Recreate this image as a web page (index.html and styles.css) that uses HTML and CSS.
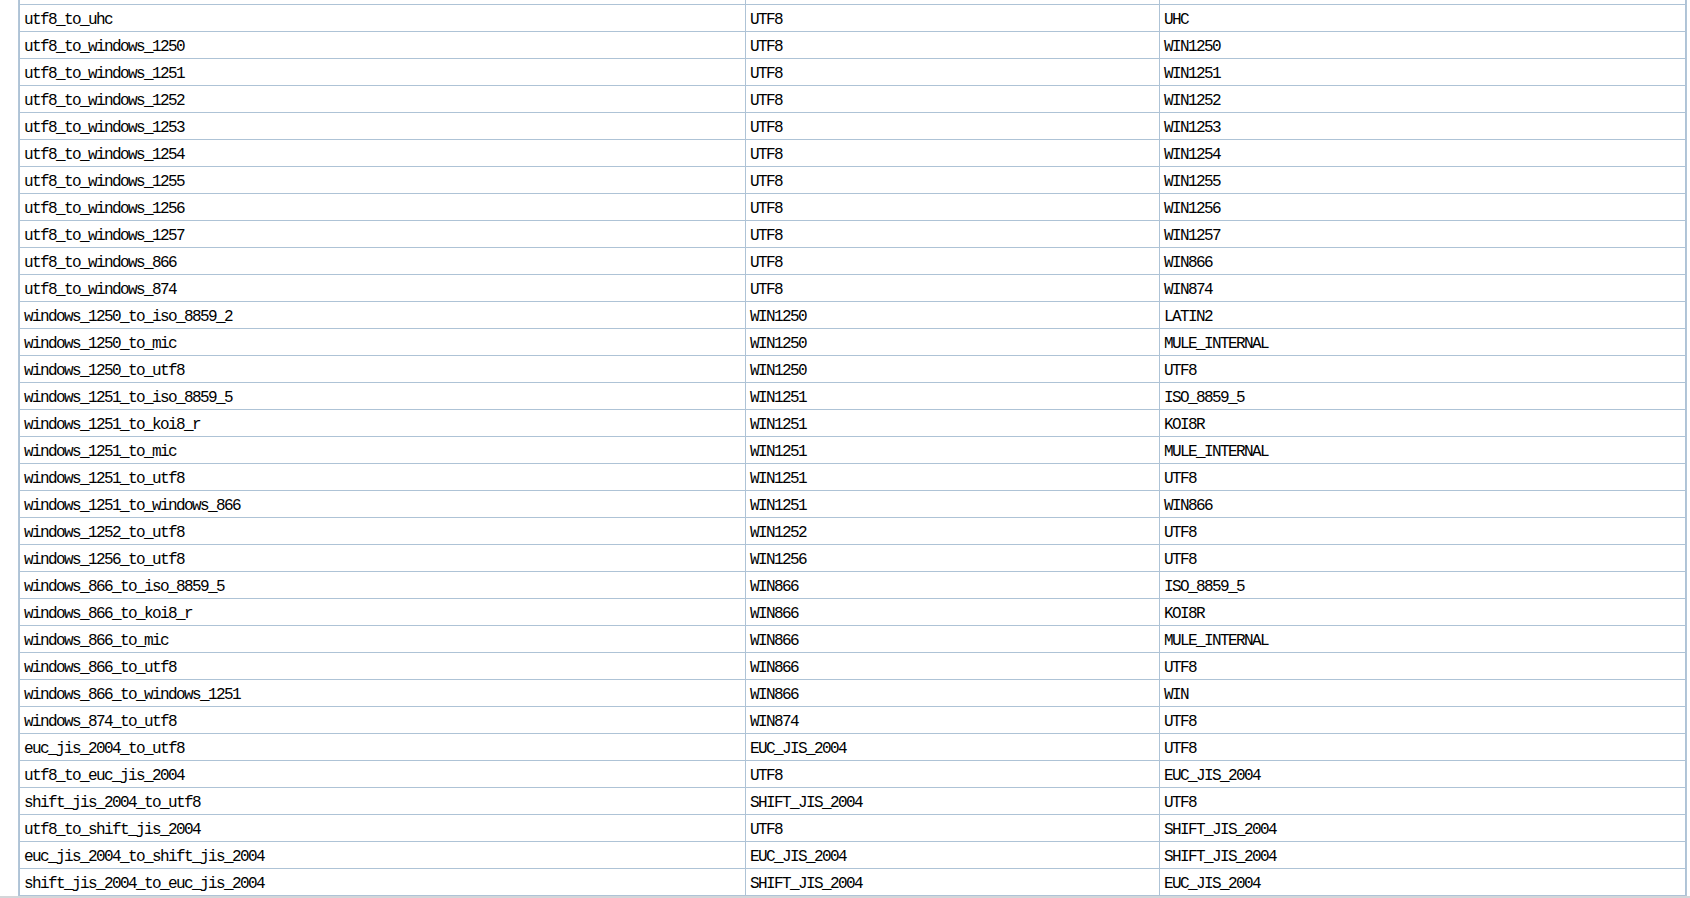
FILE: index.html
```html
<!DOCTYPE html>
<html>
<head>
<meta charset="utf-8">
<title>Conversions</title>
<link rel="stylesheet" href="styles.css">
</head>
<body>
<div class="viewport">
  <table class="grid">
    <colgroup>
      <col class="c-name">
      <col class="c-src">
      <col class="c-dst">
    </colgroup>
    <tbody>
      <tr class="partial"><td></td><td></td><td></td></tr>
      <tr><td>utf8_to_uhc</td><td>UTF8</td><td>UHC</td></tr>
      <tr><td>utf8_to_windows_1250</td><td>UTF8</td><td>WIN1250</td></tr>
      <tr><td>utf8_to_windows_1251</td><td>UTF8</td><td>WIN1251</td></tr>
      <tr><td>utf8_to_windows_1252</td><td>UTF8</td><td>WIN1252</td></tr>
      <tr><td>utf8_to_windows_1253</td><td>UTF8</td><td>WIN1253</td></tr>
      <tr><td>utf8_to_windows_1254</td><td>UTF8</td><td>WIN1254</td></tr>
      <tr><td>utf8_to_windows_1255</td><td>UTF8</td><td>WIN1255</td></tr>
      <tr><td>utf8_to_windows_1256</td><td>UTF8</td><td>WIN1256</td></tr>
      <tr><td>utf8_to_windows_1257</td><td>UTF8</td><td>WIN1257</td></tr>
      <tr><td>utf8_to_windows_866</td><td>UTF8</td><td>WIN866</td></tr>
      <tr><td>utf8_to_windows_874</td><td>UTF8</td><td>WIN874</td></tr>
      <tr><td>windows_1250_to_iso_8859_2</td><td>WIN1250</td><td>LATIN2</td></tr>
      <tr><td>windows_1250_to_mic</td><td>WIN1250</td><td>MULE_INTERNAL</td></tr>
      <tr><td>windows_1250_to_utf8</td><td>WIN1250</td><td>UTF8</td></tr>
      <tr><td>windows_1251_to_iso_8859_5</td><td>WIN1251</td><td>ISO_8859_5</td></tr>
      <tr><td>windows_1251_to_koi8_r</td><td>WIN1251</td><td>KOI8R</td></tr>
      <tr><td>windows_1251_to_mic</td><td>WIN1251</td><td>MULE_INTERNAL</td></tr>
      <tr><td>windows_1251_to_utf8</td><td>WIN1251</td><td>UTF8</td></tr>
      <tr><td>windows_1251_to_windows_866</td><td>WIN1251</td><td>WIN866</td></tr>
      <tr><td>windows_1252_to_utf8</td><td>WIN1252</td><td>UTF8</td></tr>
      <tr><td>windows_1256_to_utf8</td><td>WIN1256</td><td>UTF8</td></tr>
      <tr><td>windows_866_to_iso_8859_5</td><td>WIN866</td><td>ISO_8859_5</td></tr>
      <tr><td>windows_866_to_koi8_r</td><td>WIN866</td><td>KOI8R</td></tr>
      <tr><td>windows_866_to_mic</td><td>WIN866</td><td>MULE_INTERNAL</td></tr>
      <tr><td>windows_866_to_utf8</td><td>WIN866</td><td>UTF8</td></tr>
      <tr><td>windows_866_to_windows_1251</td><td>WIN866</td><td>WIN</td></tr>
      <tr><td>windows_874_to_utf8</td><td>WIN874</td><td>UTF8</td></tr>
      <tr><td>euc_jis_2004_to_utf8</td><td>EUC_JIS_2004</td><td>UTF8</td></tr>
      <tr><td>utf8_to_euc_jis_2004</td><td>UTF8</td><td>EUC_JIS_2004</td></tr>
      <tr><td>shift_jis_2004_to_utf8</td><td>SHIFT_JIS_2004</td><td>UTF8</td></tr>
      <tr><td>utf8_to_shift_jis_2004</td><td>UTF8</td><td>SHIFT_JIS_2004</td></tr>
      <tr><td>euc_jis_2004_to_shift_jis_2004</td><td>EUC_JIS_2004</td><td>SHIFT_JIS_2004</td></tr>
      <tr><td>shift_jis_2004_to_euc_jis_2004</td><td>SHIFT_JIS_2004</td><td>EUC_JIS_2004</td></tr>
    </tbody>
  </table>
</div>
</body>
</html>
```

FILE: styles.css
```css
html, body {
  margin: 0;
  padding: 0;
  background: #ffffff;
}

.viewport {
  height: 896px;
  overflow: hidden;
  padding-left: 18px;
  border-bottom: 2px solid #d4d6d9;
  background: #ffffff;
}

.grid {
  margin-top: -22px;
  border-collapse: separate;
  border-spacing: 0;
  table-layout: fixed;
  width: 1669px;
  border-left: 1px solid #b3c6d8;
  border-right: 1px solid #b3c6d8;
  font-family: "Liberation Mono", "DejaVu Sans Mono", monospace;
  font-size: 16px;
  letter-spacing: -1.6px;
  color: #000000;
}

.c-name { width: 726px; }
.c-src { width: 414px; }
.c-dst { width: 527px; }

.grid td {
  box-sizing: border-box;
  height: 27px;
  padding: 4px 4px 0 4px;
  line-height: 22px;
  white-space: nowrap;
  overflow: hidden;
  border-left: 1px solid #aec3d6;
  border-bottom: 1px solid #aec3d6;
  vertical-align: top;
}

.grid td:last-child {
  border-right: 1px solid #aec3d6;
}
```
